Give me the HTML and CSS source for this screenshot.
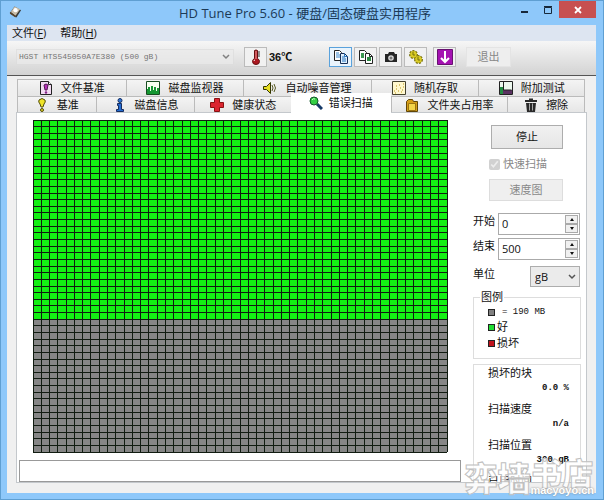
FILE: index.html
```html
<!DOCTYPE html>
<html lang="zh-CN">
<head>
<meta charset="utf-8">
<title>HD Tune Pro 5.60 - 硬盘/固态硬盘实用程序</title>
<link rel="stylesheet" href="styles.css">
</head>
<body>
<div class="window">
  <header class="titlebar">
    <svg class="app-icon" viewBox="0 0 14 14"><path d="M6 1l7 4-5 8-7-5z" fill="#3a3a38"/><path d="M6 1l6 3-5 7-5-4z" fill="#c9bda8"/><circle cx="7" cy="5" r="2.300" fill="#fff"/><path d="M1 7l6 4v2L1 9z" fill="#5b4327"/></svg>
    <h1>HD Tune Pro 5.60 - 硬盘/固态硬盘实用程序</h1>
    <div class="win-buttons">
      <button class="min" aria-label="最小化"><svg viewBox="0 0 10 10"><path d="M1 6h7v2H1z" fill="#17283a"/></svg></button>
      <button class="max" aria-label="最大化"><svg viewBox="0 0 10 10"><path d="M1.500 2.500h7v6h-7zM1 1.500h8" fill="none" stroke="#17283a"/></svg></button>
      <button class="close" aria-label="关闭"><svg viewBox="0 0 10 10"><path d="M2 2l6 6M8 2L2 8" stroke="#fff" stroke-width="1.800"/></svg></button>
    </div>
  </header>
  <div class="client">
    <nav class="menu"><a href="#file">文件(<u>F</u>)</a><a href="#help">帮助(<u>H</u>)</a></nav>
    <div class="toolbar">
      <select class="drive" aria-label="硬盘" disabled><option>HGST HTS545050A7E380 (500 gB)</option></select>
      <button class="tool temp" aria-label="温度"><svg viewBox="0 0 16 16"><path d="M6.500 1.500q1.500-1 3 0v8q2 1 2 3 0 3-3.500 3t-3.500-3q0-2 2-3z" fill="#ac1720" stroke="#611"/><path d="M8 2v8" stroke="#f8a0a0"/><path d="M10 3h2M10 5h2M10 7h2" stroke="#333"/><path d="M6 12q0-1 1-1" stroke="#fff" fill="none"/></svg></button>
      <output class="degrees">36℃</output>
      <div class="tools">
        <button class="tool active" aria-label="复制文本"><svg viewBox="0 0 16 16"><path d="M1.500 1.500h5l2 2v8h-7z" fill="#fff" stroke="#222"/><path d="M3 4h3M3 6h4M3 8h4" stroke="#3986cc"/><path d="M7.500 4.500h4l3 3v7h-7z" fill="#dff1ff" stroke="#172e55"/><path d="M11.500 4.500v3h3M9 8h3M9 10h4M9 12h4" fill="none" stroke="#2773bc"/></svg></button>
        <button class="tool" aria-label="复制图像"><svg viewBox="0 0 16 16"><path d="M1.500 1.500h5l2 2v8h-7z" fill="#fff" stroke="#222"/><path d="M3 4h3v5H3z" fill="#3b9850"/><path d="M7.500 4.500h4l3 3v7h-7z" fill="#fff" stroke="#222"/><path d="M9 8h4v4H9z" fill="#2c8a42"/><path d="M11.500 4.500v3h3" fill="none" stroke="#222"/></svg></button>
        <button class="tool" aria-label="截图"><svg viewBox="0 0 16 16"><path d="M2 5h3l1-2h5l1 2h2v8H2z" fill="#252525"/><circle cx="8" cy="9" r="2.800" fill="#ddd"/><circle cx="8" cy="9" r="1.500" fill="#777"/></svg></button>
        <button class="tool" aria-label="选项"><svg viewBox="0 0 16 16"><g fill="#d8ca24" stroke="#77700c"><circle cx="5.500" cy="5.500" r="3.500" stroke-dasharray="2 1" stroke-width="2"/><circle cx="10.500" cy="10.500" r="3.500" stroke-dasharray="2 1" stroke-width="2"/><circle cx="5.500" cy="5.500" r="3.200" stroke="none"/><circle cx="10.500" cy="10.500" r="3.200" stroke="none"/><path d="M5 3v3h2M10 8v3h2" fill="none"/></g></svg></button>
        <button class="tool save" aria-label="保存"><svg viewBox="0 0 16 16"><path d="M.500.500h15v15H.500z" fill="#a511b2" stroke="#681070"/><path d="M8 2v11M4 9l4 4 4-4" fill="none" stroke="#fff" stroke-width="2"/></svg></button>
      </div>
      <button class="exit" disabled>退出</button>
    </div>
    <main>
      <nav class="tabs back">
        <button><svg viewBox="0 0 14 14"><path d="M1.500.500h8l3 3v10h-11z" fill="#f2daf2" stroke="#222"/><path d="M9.500.500v3h3" fill="#fff" stroke="#222"/><path d="M5 4q2-2 4 0L8 9H6z" fill="#b52bb8" stroke="#501850"/><circle cx="7" cy="11.500" r="1.200" fill="#842286"/></svg>文件基准</button>
        <button><svg viewBox="0 0 14 14"><path d="M.500.500h13v13H.500z" fill="#f6fff0" stroke="#174b20"/><path d="M1 13V8h1V6h2v4h1V5h2v4h1V6h2v4h1V7h2v6z" fill="#159632"/></svg>磁盘监视器</button>
        <button><svg viewBox="0 0 14 14"><path d="M.500 5.500h3l4-4v11l-4-4h-3z" fill="#e7df25" stroke="#333500"/><path d="M9 4q2 3 0 6M11 3q3 4 0 8" fill="none" stroke="#595b24"/></svg>自动噪音管理</button>
        <button><svg viewBox="0 0 14 14"><path d="M.500.500h13v13H.500z" fill="#fff8ce" stroke="#44412f"/><path d="M2 10h1M4 8h1M6 10h1M8 7h1M10 9h1M4 5h1M7 4h1M11 3h1M9 11h1M3 12h1M11 6h1" stroke="#b89116"/></svg>随机存取</button>
        <button><svg viewBox="0 0 14 14"><path d="M.500.500h13v13H.500z" fill="#edf8ef" stroke="#222"/><path d="M1 6h3v7H1z" fill="#238c43"/><path d="M4 9h9v4H4z" fill="#5b3261"/><path d="M4.500 1v8h8" fill="none" stroke="#222"/></svg>附加测试</button>
      </nav>
      <nav class="tabs front">
        <button><svg viewBox="0 0 14 14"><path d="M4 2q3-3 6 0 1 2-1 4L8 9H6L5 6Q3 4 4 2z" fill="#eee329" stroke="#514c0b"/><circle cx="7" cy="12" r="1.500" fill="#e4d526" stroke="#514c0b"/></svg>基准</button>
        <button><svg viewBox="0 0 14 14"><circle cx="7" cy="2.500" r="2" fill="#2e77d8" stroke="#152d61"/><path d="M4.500 5.500h4v6h2v2h-7v-2h2v-4h-1z" fill="#246bd0" stroke="#152d61"/></svg>磁盘信息</button>
        <button><svg viewBox="0 0 14 14"><path d="M4.500.500h5v4h4v5h-4v4h-5v-4h-4v-5h4z" fill="#db2530" stroke="#811"/></svg>健康状态</button>
        <button class="current" aria-current="page"><svg viewBox="0 0 14 14"><path d="M8 8l5 5" stroke="#153866" stroke-width="3"/><circle cx="5" cy="5" r="4" fill="#35cf44" stroke="#14572a"/><path d="M3 4q1-2 3-1" fill="none" stroke="#c9ffd0"/></svg>错误扫描</button>
        <button><svg viewBox="0 0 14 14"><path d="M1.500 3.500l2-2h4l1 2h4v10h-11z" fill="#d59d18" stroke="#614606"/><path d="M3.500 5.500h7v7h-7z" fill="#f3d448" stroke="#9b7310"/></svg>文件夹占用率</button>
        <button><svg viewBox="0 0 14 14"><path d="M1 2h4V.500h4V2h4v2H1zM2 5h10l-1 9H3z" fill="#292929"/><path d="M5.500 5.500v7M8.500 5.500v7" stroke="#aaa"/></svg>擦除</button>
      </nav>
      <section class="page">
        <div class="scan">
          <div class="surface"><svg class="blocks" viewBox="0 0 50 50" preserveAspectRatio="none" role="img" aria-label="扫描块"><path d="M0 0h50v50H0z" fill="#868686"/><path d="M0 0h50v30H0z" fill="#14f014"/><path id="lines" class="lines"/></svg></div>
          <output class="log"></output>
        </div>
        <aside>
          <div class="actions">
            <button class="btn stop">停止</button>
            <label class="quick"><input type="checkbox" checked disabled><span>快速扫描</span></label>
            <button class="btn map" disabled>速度图</button>
          </div>
          <div class="fields">
            <label for="start">开始</label>
            <div class="spin"><input id="start" value="0"><span class="arrows"><button aria-label="开始 增加" class="up"></button><button aria-label="开始 减少" class="down"></button></span></div>
            <label for="end">结束</label>
            <div class="spin"><input id="end" value="500"><span class="arrows"><button aria-label="结束 增加" class="up"></button><button aria-label="结束 减少" class="down"></button></span></div>
            <label for="unit">单位</label>
            <select id="unit" class="unit"><option>gB</option></select>
          </div>
          <fieldset class="legend"><legend>图例</legend>
            <p class="mono"><i></i>= 190 MB</p><p><i class="good"></i>好</p><p><i class="bad"></i>损坏</p>
          </fieldset>
          <dl class="stats"><dt>损坏的块</dt><dd>0.0 %</dd><dt>扫描速度</dt><dd>n/a</dd><dt>扫描位置</dt><dd>300 gB</dd><dt>已用时间</dt></dl>
        </aside>
      </section>
    </main>
  </div>
  <div class="watermark"><b>弈墙</b><div><b>书店</b><span>macyoyo.cn</span></div></div>
</div>
<script src="blocks.js"></script>
</body>
</html>
```
FILE: styles.css
```css
* { box-sizing: border-box; }
body { margin: 0; font: 12px/16px "Open Sans", "Noto Sans CJK SC", sans-serif; color: #111; }
button, input, select { font: inherit; color: inherit; margin: 0; padding: 0; border-radius: 0; }
p, dl, dd { margin: 0; }

.window { position: relative; height: 100vh; min-height: 500px; display: flex; flex-direction: column; padding: 0 7px 6px 6px; background: #8ec8fa; border: 1px solid #5f9fd2; }
.titlebar { height: 24px; flex: none; display: grid; grid-template-columns: 172px 1fr auto; align-items: start; }
.app-icon { width: 13px; height: 14px; margin: 4px 0 0 2px; }
h1 { margin: 2px 0 0; font: 13px/20px "Open Sans", "Noto Sans CJK SC", sans-serif; color: #1c3a56; white-space: nowrap; }
.win-buttons { display: flex; }
.win-buttons button { width: 23px; height: 17px; border: 0; background: none; display: grid; place-items: center; }
.win-buttons svg { width: 10px; height: 10px; }
.win-buttons .close { width: 37px; background: #c75050; }

.client { flex: 1; min-height: 0; background: #f0f0f0; display: flex; flex-direction: column; }
.menu { height: 16px; flex: none; display: flex; gap: 14px; padding-left: 5px; background: #dde5f1; }
.menu a { color: inherit; text-decoration: none; font-size: 11px; }

.toolbar { flex: none; height: 35px; display: flex; align-items: center; padding: 0 0 3px 9px; background: linear-gradient(#f6f6f6, #d3d3d3); border-bottom: 1px solid #555; }
.drive, .unit { appearance: none; background: url("data:image/svg+xml,%3Csvg xmlns='http://www.w3.org/2000/svg' viewBox='0 0 8 8'%3E%3Cpath d='M1 2l3 3 3-3' fill='none' stroke='%23555' stroke-width='1.500'/%3E%3C/svg%3E") no-repeat right 3px center / 8px 8px; }
.drive { width: 218px; height: 16px; padding-left: 2px; border: 1px solid #ddd; background-color: #ebebeb; font: 8px/14px "Liberation Mono", monospace; color: #444; }
.tool { width: 23px; height: 20px; border: 1px solid #bbb; background: #f1f1f1; display: grid; place-items: center; }
.tool.active { border-color: #5aa2dc; background: #eaf4fc; }
.tool svg { width: 16px; height: 16px; }
.temp { margin-left: 10px; }
.degrees { width: 62px; padding-left: 2px; font: bold 11px/16px "Liberation Sans", "Noto Sans CJK SC", sans-serif; }
.tools { display: flex; gap: 2px; }
.tools .save { margin-left: 4px; }
.exit { width: 45px; height: 20px; margin-left: 10px; border: 1px solid #e4e4e4; background: #eee; color: #888; font-size: 11px; }

main { flex: 1; min-height: 0; display: flex; flex-direction: column; padding: 3px 9px 10px 9px; }
.tabs { display: grid; padding: 0 2px 0 1px; height: 17px; flex: none; }
.front { height: 16px; }
.tabs button { display: flex; justify-content: center; align-items: center; gap: 8px; border: 1px solid #bbb; border-width: 1px 0 0 1px; background: linear-gradient(#f4f4f4, #e5e5e5); font-size: 11px; line-height: 14px; white-space: nowrap; }
.tabs button:last-child { border-right-width: 1px; }
.tabs svg { width: 14px; height: 14px; flex: none; }
.back { grid-template-columns: 109fr 118fr 128fr 108fr 107fr; }
.front { grid-template-columns: 79fr 99fr 97fr 100fr 117fr 78fr; }
.tabs .current { background: #fff; border: 0; height: 20px; margin-top: -3px; z-index: 1; gap: 6px; }

.page { flex: 1; min-height: 0; display: flex; gap: 12px; padding: 7px 5px 0 2px; background: #fff; border: 1px solid #c4c8cc; }
.scan { flex: 1; min-width: 0; display: flex; flex-direction: column; gap: 8px; }
.surface { flex: 1; min-height: 0; display: flex; padding: 0 14px; }
.blocks { width: 100%; height: 100%; overflow: visible; }
.lines { fill: none; stroke: #111c11; stroke-width: 1px; vector-effect: non-scaling-stroke; shape-rendering: crispEdges; }
.log { height: 22px; flex: none; border: 1px solid #999; }

aside { width: 108px; flex: none; display: flex; flex-direction: column; }
.actions { display: flex; flex-direction: column; align-items: flex-end; padding: 5px 18px 0 0; }
.btn { border: 1px solid #adadad; background: linear-gradient(#f1f1f1, #e6e6e6); font-size: 11px; }
.stop { width: 72px; height: 24px; }
.quick { width: 74px; height: 30px; display: flex; align-items: center; gap: 3px; font-size: 11px; color: #888; white-space: nowrap; }
.quick input { width: 11px; height: 11px; }
.map { width: 74px; height: 22px; border-color: #ddd; background: #efefef; color: #888; }
.fields { display: grid; grid-template-columns: 25px minmax(0, 1fr); gap: 3px 0; padding: 12px 1px 0 0; font-size: 11px; }
.fields label { white-space: nowrap; }
.spin { display: flex; height: 22px; border: 1px solid #aaa; padding: 1px; background: #fff; }
.spin input { flex: 1; min-width: 0; border: 0; padding: 0 2px; outline: 0; }
.arrows { width: 13px; flex: none; display: grid; grid-template-rows: 1fr 1fr; }
.arrows button { display: grid; place-items: center; border: 1px solid #aaa; background: #f0f0f0; }
.arrows button::before { content: ""; border: 2px solid transparent; }
.arrows .up::before { border-top: 0; border-bottom: 3px solid #111; }
.arrows .down::before { border-bottom: 0; border-top: 3px solid #111; }
.fields .unit { justify-self: end; width: 50px; height: 21px; margin-top: 3px; padding-left: 4px; border: 1px solid #adadad; background-color: #ebebeb; }
.fields label:nth-last-child(2) { padding-top: 3px; }
.legend { margin: 2px 0 0; min-width: 0; height: 70px; padding: 0 0 0 14px; border: 1px solid #ddd; font-size: 11px; }
.legend legend { margin-left: -8px; padding: 0 1px; }
.legend p { display: flex; align-items: center; gap: 2px; }
.legend i { width: 7px; height: 7px; border: 1px solid #222; background: #808080; }
.legend .good { background: #2d3; }
.legend .bad { background: #c1121c; }
.legend .mono { gap: 7px; font: 9px/14px "Liberation Mono", monospace; }
.stats { flex: 1; min-height: 0; overflow: hidden; margin-top: 5px; padding: 0 11px 0 14px; border: 1px solid #ddd; border-bottom: 0; font-size: 11px; }
.stats dt { line-height: 16px; }
.stats dd { height: 20px; text-align: right; font: bold 9px/14px "Liberation Mono", monospace; }

.watermark { position: absolute; right: 9px; bottom: 4px; display: flex; color: #ffffffc0; font-family: "Noto Sans CJK SC", sans-serif; -webkit-text-stroke: 1px #c0c0c0; pointer-events: none; }
.watermark b { font-size: 33px; line-height: 36px; font-weight: 900; }
.watermark div { display: flex; flex-direction: column; align-items: center; }
.watermark div b { font-size: 31px; line-height: 26px; }
.watermark span { font: bold 11px/10px "Liberation Sans", sans-serif; color: #fff; -webkit-text-stroke: 0; text-shadow: 0 0 2px #777; }
```
FILE: blocks.js
```js
const count = 50;
let d = "";
for (let i = 0; i <= count; i++) d += `M0 ${i}H${count}M${i} 0V${count}`;
document.getElementById("lines").setAttribute("d", d);
```
